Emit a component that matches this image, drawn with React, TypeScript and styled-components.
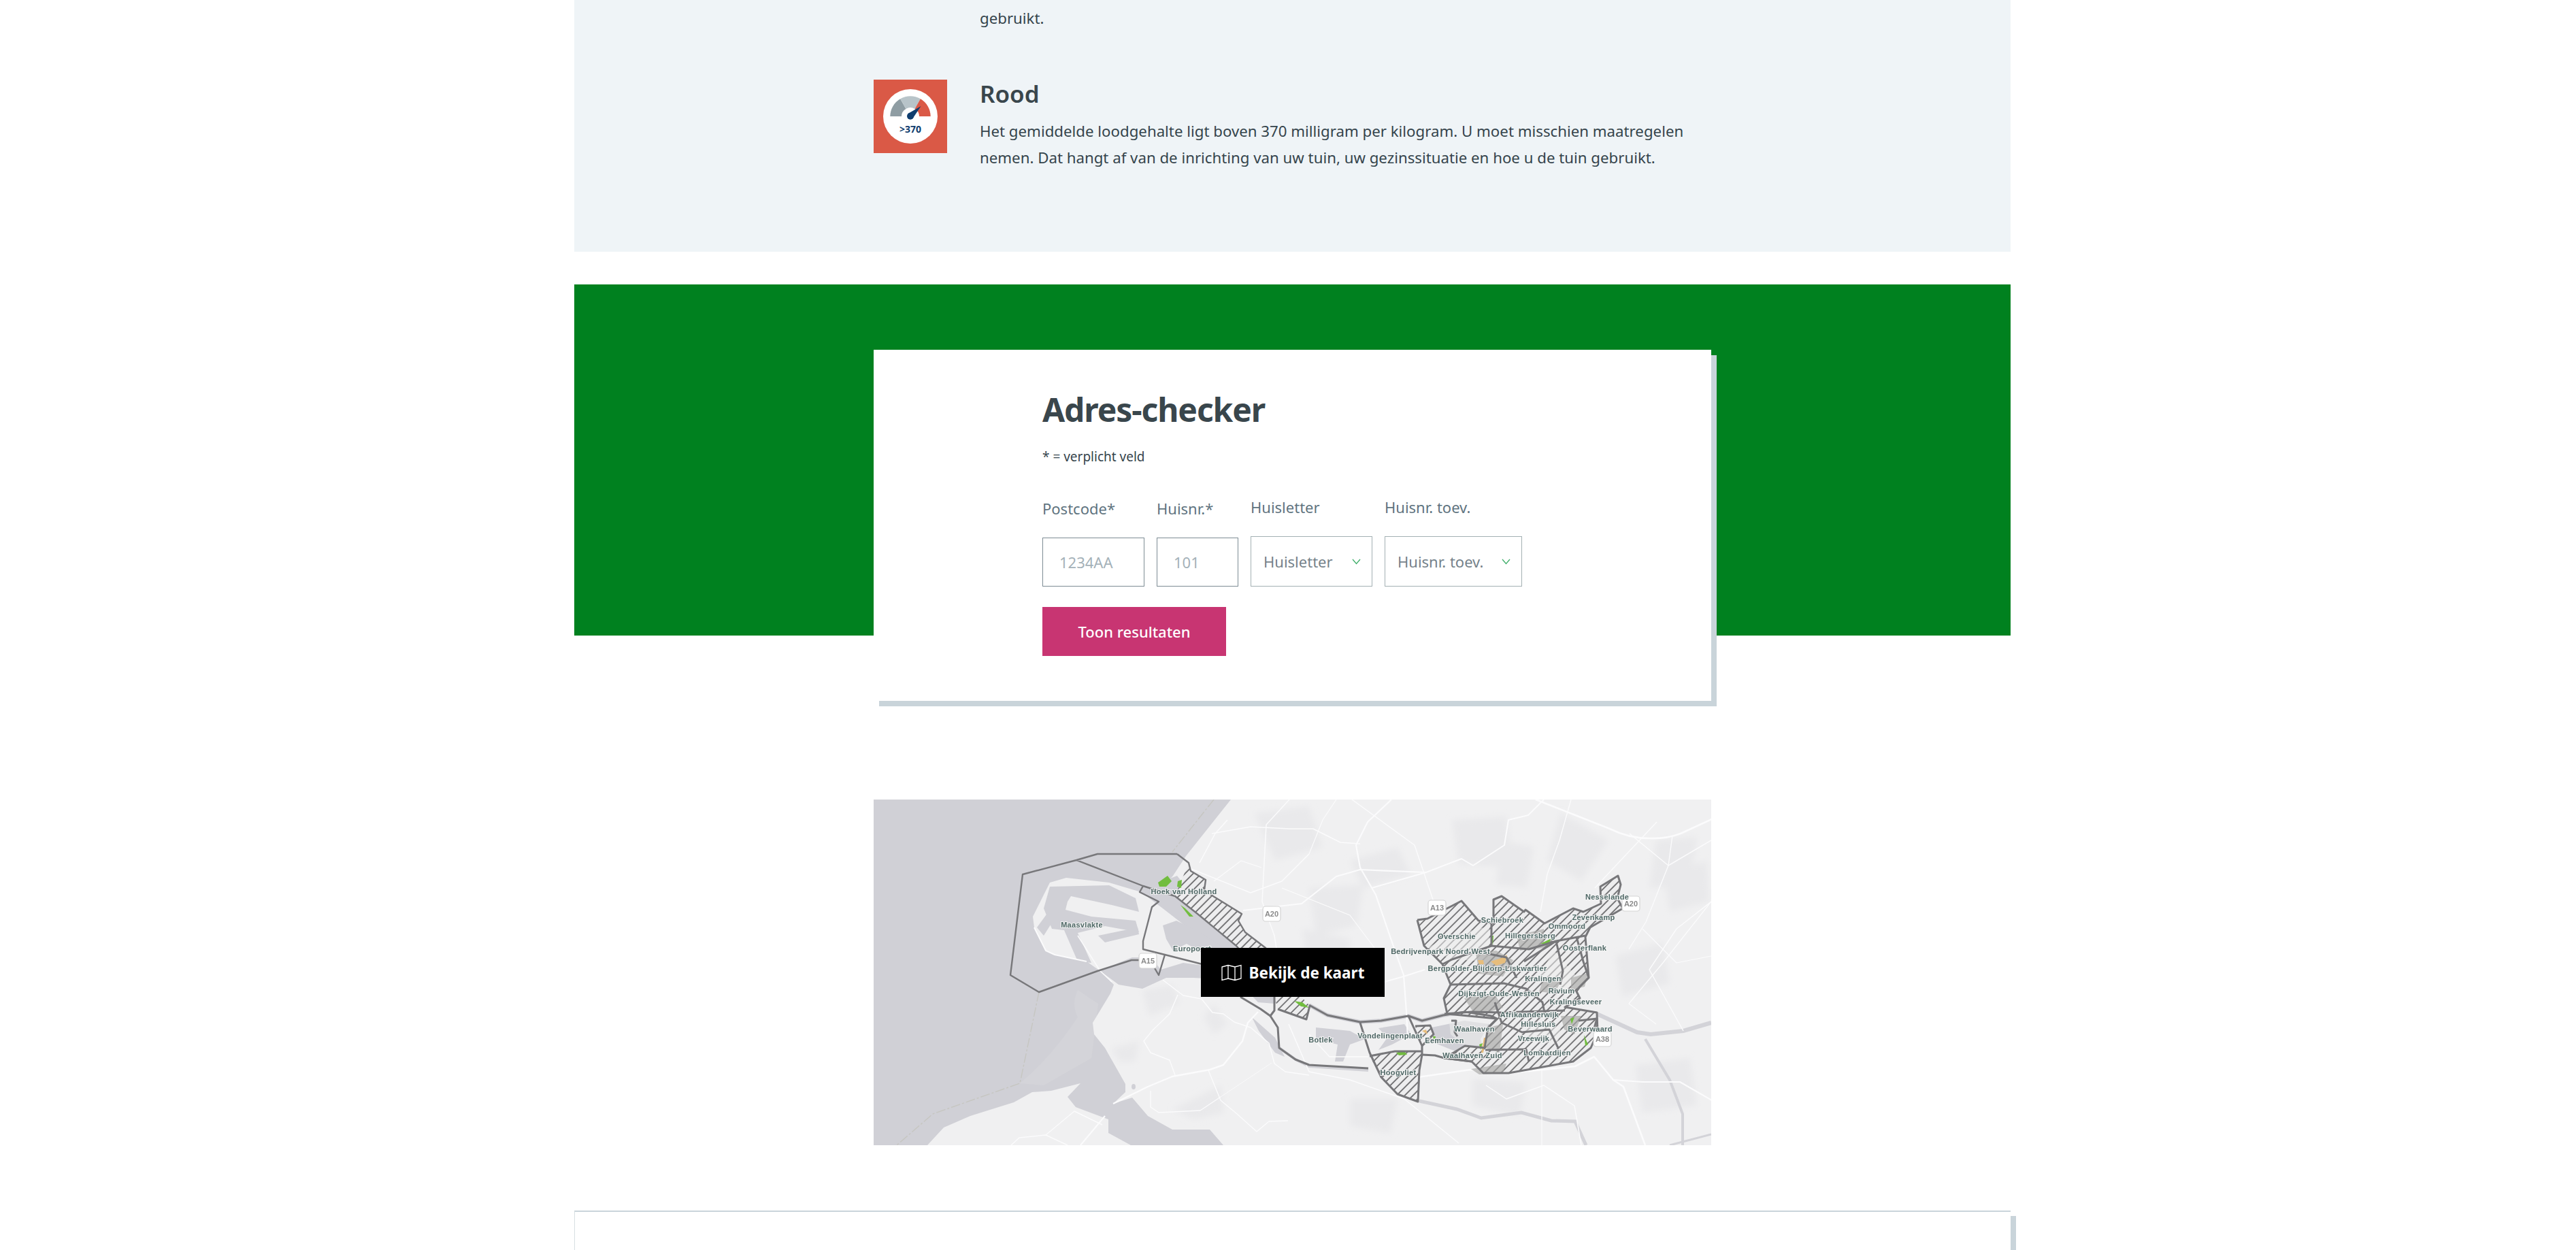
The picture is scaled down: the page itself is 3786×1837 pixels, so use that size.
import styled, { createGlobalStyle } from 'styled-components'

const GlobalStyle = createGlobalStyle`
  html, body {
    margin: 0;
    height: 100%;
    overflow: hidden;
    background: #fff;
  }
`

const SEA = '#d0d0d6'
const LAND = '#f0f0f1'
const PATCH = '#e9e9eb'
const OUTLINE = '#77777a'

const landAreas = [
  '525,0 1231,0 1231,508 514,508 494,485 467,485 439,485 403,465 380,438 352,447 370,430 370,418 340,365 324,345 322,328 348,285 353,272 333,252 313,238 266,228 253,222 236,188 234,172 259,122 283,115 346,122 393,136 425,128 440,112 459,83',
  '79,508 103,482 142,465 206,445 233,430 261,428 304,417 285,437 297,452 345,470 345,490 378,508',
]

const waterAreas = [
  '393,136 420,122 446,112 476,150 540,215 600,285 590,300 565,298 520,250 470,195 425,160',
  '333,252 360,240 380,232 408,232 422,250 455,240 500,246 530,265 470,262 430,262 395,278 360,272',
  '259,128 346,126 385,145 390,165 350,155 290,142 285,150 282,162 320,172 385,178 390,195 340,186 300,196 320,240 300,238 280,192 262,190 250,160',
  '240,188 262,158 272,165 250,200',
  '330,200 388,188 390,198 340,210',
  '425,185 445,178 480,195 540,235 500,235 460,212 440,222 430,205',
  '556,320 590,350 604,378 590,372 566,340',
  '650,335 700,340 722,352 700,360 690,385 678,385 682,360 650,352',
  '742,336 780,330 790,345 762,360 742,368 755,350',
  '820,335 868,325 905,330 892,352 900,382 850,368 825,358',
]

const patches = [
  '560,20 640,10 660,70 590,90',
  '700,90 770,70 790,110 720,130',
  '850,30 930,25 940,100 860,95',
  '1010,20 1080,60 1040,120 990,90',
  '1150,60 1210,55 1200,125 1140,130',
  '640,130 720,125 710,185 650,200',
  '920,60 970,70 960,130 915,125',
  '395,280 440,272 450,300 405,318',
  '350,365 390,355 385,385 360,385',
  '440,455 510,420 515,460 470,470',
  '500,300 520,330 500,345 485,320',
  '1090,230 1160,210 1170,270 1100,290',
  '1120,390 1200,380 1210,450 1130,460',
  '700,440 770,440 760,490 700,480',
  '880,410 960,415 950,465 880,450',
  '1160,110 1225,90 1228,150 1170,165',
  '630,190 700,205 700,285 640,260',
]

const waterLines = [
  { width: 6, d: 'M640 302 L667 317 L715 327 L746 325 L786 318 L806 325 L837 317 L869 312 L908 318 L1016 310 L1063 315 L1122 342 L1142 345 L1190 340 L1231 328' },
  { width: 5, d: 'M802 443 L857 455 L893 468 L952 460 L996 472 L1031 473 L1047 508' },
  { width: 4, d: 'M1134 352 L1170 412 L1189 462 L1189 508' },
  { width: 3, d: 'M1231 492 L1170 508' },
  { width: 4, d: 'M596 365 L620 382 L640 392 L727 398' },
]

const roads = [
  { width: 2.6, d: 'M973 0 L1082 43 Q1110 57 1140 57 Q1165 58 1186 50 L1236 27' },
  { width: 2.2, d: 'M761 0 L726 33 L709 67 L715 100 L738 140 L761 207 L779 258 L783 312 L785 350' },
  { width: 1.4, d: 'M703 0 L795 67 L824 153' },
  { width: 2, d: 'M732 130 L812 107 L864 87 L881 97 L927 67 L933 30 L962 23 L985 0' },
  { width: 2.2, d: 'M543 163 L629 153 L680 113 L715 103 L812 107' },
  { width: 1.5, d: 'M497 50 L554 40 L611 43 L646 43 L686 63 L715 65' },
  { width: 1.5, d: 'M611 0 L577 37 L571 150 L589 200 L600 270' },
  { width: 1.5, d: 'M479 93 L502 50 L520 30' },
  { width: 1.5, d: 'M462 100 L554 137 L600 120 L640 80' },
  { width: 1.5, d: 'M1111 50 L1168 97 L1231 60' },
  { width: 1.5, d: 'M1151 33 L1088 100 L1060 130' },
  { width: 1.4, d: 'M1025 0 L1008 60 L990 110 L980 165' },
  { width: 1.4, d: 'M1174 53 L1168 97 L1135 180 L1110 220' },
  { width: 1.3, d: 'M1231 150 L1160 240 L1110 300' },
  { width: 2.6, d: 'M800 408 L877 397 L932 402 L984 397 L1031 392 L1059 378 L1087 412 L1102 422 L1134 508' },
  { width: 2.2, d: 'M1087 412 L1130 415 L1185 415 L1232 442' },
  { width: 1.2, d: 'M982 398 L982 508' },
  { width: 2.4, d: 'M352 447 L403 422 L439 407 L494 397 L514 390 L542 355 L550 328 L565 312' },
  { width: 1.5, d: 'M447 287 L435 315 L411 338 L397 355 L407 372 L435 383 L443 405' },
  { width: 1.5, d: 'M425 265 L455 288 L482 293 L498 313 L514 315 L530 327 L554 335 L581 358 L589 388 L605 400 L640 405' },
  { width: 1.4, d: 'M492 398 L510 442 L534 462 L563 488 L581 473 L609 472' },
  { width: 1.4, d: 'M407 428 L407 452 L419 460 L480 457 L510 437' },
  { width: 0.8, d: 'M510 437 L585 387' },
  { width: 2.2, d: 'M340 465 L304 508' },
  { width: 1.5, d: 'M202 508 L214 497 L253 493 L285 508' },
  { width: 1.5, d: 'M253 493 L295 458 L336 478' },
  { width: 2, d: 'M236 188 L253 222 L266 228 L313 238' },
  { width: 1.5, d: 'M300 200 L333 252 L350 268' },
  { width: 1.5, d: 'M610 330 L640 400 L700 412 L780 440 L860 505' },
  { width: 1.5, d: 'M900 420 L930 440 L985 420 L1030 450 L1040 508' },
  { width: 1.5, d: 'M640 345 L670 378 L727 378' },
  { width: 1.4, d: 'M1190 340 L1140 250 L1180 190 L1231 150' },
  { width: 1.2, d: 'M640 80 L660 30 L680 0' },
  { width: 1.2, d: 'M500 120 L540 90 L570 100' },
  { width: 1.2, d: 'M600 130 L650 150 L700 170 L745 230' },
  { width: 2, d: 'M700 282 L779 260 L810 250' },
  { width: 1.2, d: 'M1130 190 L1180 240 L1231 230' },
  { width: 1.2, d: 'M1110 300 L1150 330' },
]

const hatched = [
  '463,93 466,105 488,118 486,133 499,142 541,168 536,178 546,195 576,218 600,240 570,240 533,215 476,168 443,142',
  '589,290 594,308 636,323 641,303 610,270',
  '729,377 766,370 806,370 802,398 800,444 770,433 746,408',
  '796,333 818,332 823,345 806,362',
  '799,177 814,175 864,149 889,178 911,182 911,147 923,142 956,165 958,162 986,182 1028,160 1043,165 1069,153 1068,128 1094,112 1098,125 1093,145 1101,160 1053,188 1046,202 1051,262 1038,275 1033,282 1038,292 1016,305 1063,313 1064,342 1054,365 1028,385 933,402 896,402 879,385 839,380 869,362 898,365 903,335 916,322 843,315 838,292 848,272 836,242 809,215',
]

const clearings = [
  '840,202 905,186 904,238 850,235 815,218',
  '1000,222 1035,262 1012,285 975,262',
  '845,318 905,322 895,362 865,360 848,345',
  '958,330 1010,335 1005,360 960,355',
]

const coastOutlines = [
  '446,80 329,80 298,89 219,110 201,258 243,283 329,252 379,236 406,236 419,258 428,228 396,220 396,208 409,158 419,150 391,136 396,127 298,89',
  '446,80 463,93 466,105 488,118 486,133 499,142 541,168 536,178 546,195 576,218 600,245',
  '396,127 443,142 476,168 533,215 569,255',
  '428,228 483,242 510,250',
]

const cityOutlines = [
  '539,290 569,308 583,318 589,310 589,290',
  '583,318 594,335 596,365 620,382 640,390 727,395',
  '594,308 636,323 641,303',
  '640,302 667,317 715,327 746,325 786,318 806,325 837,317 869,312 908,318 916,322',
  '715,328 729,372 746,408 770,433 800,444 802,398 806,375 806,362 786,318',
  '729,377 766,370 806,370',
  '796,333 818,332 823,345 806,362',
  '806,375 825,376 839,380 879,385',
  '799,177 814,175 864,149 889,178 911,182 911,147 923,142 956,165 958,162 986,182 1028,160 1043,165 1069,153 1068,128 1094,112 1098,125 1093,145 1101,160 1053,188 1046,202 1051,262 1038,275 1033,282 1038,292 1016,305 1063,313 1064,342 1054,365 1028,385 933,402 896,402 879,385 839,380 869,362 898,365 903,335 916,322 843,315 838,292 848,272 836,242 809,215 799,177',
  '908,182 908,215 963,220 1003,208 1046,200',
  '1003,208 1013,252 1009,272',
  '848,272 926,270 959,278 983,298 986,313',
  '839,315 879,312 923,313 1016,310',
  '913,298 923,328 953,342 993,338 1006,365',
  '899,368 959,367 963,385',
  '849,325 856,325 854,342 858,348',
  '1036,325 1063,322 1058,340',
  '1033,202 1043,238 1051,262',
  '956,238 1003,208',
  '908,215 850,235 836,242',
  '895,225 930,232 945,262',
]

const urban = [
  '885,225 915,222 940,236 925,260 890,256',
  '945,200 985,190 985,215 950,222',
  '868,292 912,285 925,306 885,318',
  '985,262 1010,268 1000,285 978,282',
  '1025,262 1050,255 1045,275 1025,280',
  '1010,318 1040,318 1030,345 1015,338',
  '903,335 925,330 920,372 900,365',
  '878,396 930,388 925,402 890,404',
  '962,220 1000,205 990,218',
]

const greens = [
  '418,122 432,112 438,120 430,128 420,128',
  '447,120 453,118 452,130 446,128',
  '451,155 458,160 470,172 464,172',
  '768,372 780,370 784,375 772,376',
  '618,296 630,298 640,306 628,304',
  '1024,322 1030,320 1026,330',
  '822,348 826,348 824,358',
  '1044,346 1050,360 1046,362',
  '908,200 911,200 910,215',
  '980,212 996,204 992,212',
  '890,360 895,358 892,368',
]

const oranges = [
  '907,238 925,232 931,228 928,240 915,244',
  '888,236 896,236 897,242 890,242',
  '897,350 900,350 896,372 893,372',
  '806,340 812,338 814,345',
]

const labels = [
  { text: 'Nesselande', x: 1078, y: 143 },
  { text: 'Zevenkamp', x: 1058, y: 173 },
  { text: 'Ommoord', x: 1019, y: 186 },
  { text: 'Schiebroek', x: 924, y: 177 },
  { text: 'Overschie', x: 857, y: 201 },
  { text: 'Hillegersberg', x: 965, y: 200 },
  { text: 'Oosterflank', x: 1045, y: 218 },
  { text: 'Bedrijvenpark Noord-West', x: 833, y: 223 },
  { text: 'Bergpolder-Blijdorp-Liskwartier', x: 902, y: 248 },
  { text: 'Kralingen', x: 984, y: 263 },
  { text: 'Rivium', x: 1011, y: 281 },
  { text: 'Dijkzigt-Oude-Westen', x: 919, y: 285 },
  { text: 'Kralingseveer', x: 1032, y: 297 },
  { text: 'Afrikaanderwijk', x: 964, y: 316 },
  { text: 'Hillesluis', x: 977, y: 330 },
  { text: 'Beverwaard', x: 1053, y: 337 },
  { text: 'Waalhaven', x: 883, y: 337 },
  { text: 'Vondelingenplaat', x: 759, y: 347 },
  { text: 'Vreewijk', x: 970, y: 351 },
  { text: 'Eemhaven', x: 839, y: 354 },
  { text: 'Lombardijen', x: 990, y: 372 },
  { text: 'Waalhaven Zuid', x: 880, y: 376 },
  { text: 'Hoogvliet', x: 771, y: 401 },
  { text: 'Botlek', x: 657, y: 353 },
  { text: 'Maasvlakte', x: 306, y: 184 },
  { text: 'Hoek van Holland', x: 456, y: 135 },
  { text: 'Europoort', x: 468, y: 219 },
]

const shields = [
  { text: 'A13', x: 828, y: 159 },
  { text: 'A20', x: 1113, y: 153 },
  { text: 'A38', x: 1071, y: 352 },
  { text: 'A20', x: 585, y: 168 },
  { text: 'A15', x: 403, y: 237 },
]

const GaugeIcon = () => (
  <svg width="108" height="108" viewBox="0 0 108 108" style={{ display: 'block' }}>
    <rect width="108" height="108" fill="#da5946" />
    <circle cx="54" cy="54" r="40" fill="#fff" />
    <path d="M24.3 54 A29.7 29.7 0 0 1 39.2 28.3 L47.5 43 A13 13 0 0 0 41 54 Z" fill="#8f9da3" />
    <path d="M39.2 28.3 A29.7 29.7 0 0 1 68.8 28.3 L60.5 43 A13 13 0 0 0 47.5 43 Z" fill="#b8c4c9" />
    <path d="M68.8 28.3 A29.7 29.7 0 0 1 83.7 54 L67 54 A13 13 0 0 0 60.5 43 Z" fill="#da5946" />
    <circle cx="54" cy="53.7" r="5" fill="#0f3d6e" />
    <path d="M50.5 50 L69.5 39 L57.5 57 Z" fill="#0f3d6e" />
    <text x="54" y="78" textAnchor="middle" fontFamily="'Noto Sans', sans-serif" fontWeight="700" fontSize="14" fill="#0f3d6e">
      &gt;370
    </text>
  </svg>
)

const MapDrawing = () => (
  <MapSvg viewBox="0 0 1231 508" width="1231" height="508">
    <defs>
      <pattern id="hatch" width="8.5" height="8.5" patternUnits="userSpaceOnUse" patternTransform="rotate(45)">
        <rect width="8.5" height="8.5" fill="#ededee" />
        <line x1="1" y1="0" x2="1" y2="8.5" stroke="#3f3f41" strokeWidth="1.3" />
      </pattern>
      <filter id="soft" x="-20%" y="-20%" width="140%" height="140%">
        <feGaussianBlur stdDeviation="5" />
      </filter>
    </defs>
    <rect width="1231" height="508" fill={SEA} />
    <path d="M215 417 Q260 380 300 320 Q290 300 300 280 L330 300 L320 380 L250 420 Z" fill="#d4d4d9" />
    {landAreas.map((points) => <polygon key={points} points={points} fill={LAND} />)}
    <g filter="url(#soft)">
      {patches.map((points) => <polygon key={points} points={points} fill={PATCH} />)}
    </g>
    {waterAreas.map((points) => <polygon key={points} points={points} fill={SEA} />)}
    {waterLines.map(({ d, width }) => <path key={d} d={d} fill="none" stroke="#d3d3d8" strokeWidth={width} />)}
    <path d="M500 0 L439 77 M243 283 L215 417 L87 462 L34 508" fill="none" stroke="#c6c6c1" strokeWidth="1.4" strokeDasharray="14 3 3 3" />
    <ellipse cx="382" cy="422" rx="3" ry="4" fill={SEA} />
    {roads.map(({ d, width }) => <path key={d} d={d} fill="none" stroke="#fbfbfc" strokeWidth={width} strokeLinejoin="round" />)}
    {hatched.map((points) => <polygon key={points} points={points} fill="url(#hatch)" />)}
    {clearings.map((points) => <polygon key={points} points={points} fill="#eeeeef" opacity="0.55" />)}
    {urban.map((points) => <polygon key={points} points={points} fill="#a8a8a6" opacity="0.65" />)}
    {oranges.map((points) => <polygon key={points} points={points} fill="#e7bd7c" />)}
    {greens.map((points) => <polygon key={points} points={points} fill="#72bd3f" />)}
    {coastOutlines.map((points) => (
      <polyline key={points} points={points} fill="none" stroke={OUTLINE} strokeWidth="2.4" strokeLinejoin="round" />
    ))}
    {cityOutlines.map((points) => (
      <polyline key={points} points={points} fill="none" stroke={OUTLINE} strokeWidth="3" strokeLinejoin="round" />
    ))}
    {shields.map(({ text, x, y }) => (
      <g key={text + x}>
        <rect x={x - 13} y={y - 11} width="26" height="22" rx="4" fill="#fff" stroke="#d4d4d4" strokeWidth="1.2" />
        <ShieldText x={x} y={y + 4}>{text}</ShieldText>
      </g>
    ))}
    {labels.map(({ text, x, y }) => <MapLabel key={text} x={x} y={y + 4}>{text}</MapLabel>)}
  </MapSvg>
)

const Chevron = () => (
  <ChevronSvg width="13" height="9" viewBox="0 0 13 9">
    <polyline points="1,1 6.5,7.5 12,1" fill="none" stroke="#3fae6a" strokeWidth="1.3" />
  </ChevronSvg>
)

const FoldedMapIcon = () => (
  <svg width="30" height="25" viewBox="0 0 30 25" style={{ display: 'block' }}>
    <path d="M1 4 L10 1.5 L20 4 L29 1.5 L29 21 L20 23.5 L10 21 L1 23.5 Z M10 1.5 V21 M20 4 V23.5" fill="none" stroke="#fff" strokeWidth="1.3" />
  </svg>
)

const App = () => {
  return (
    <Page>
      <GlobalStyle />
      <InfoPanel>
        <Paragraph $indent>gebruikt.</Paragraph>
        <InfoRow>
          <GaugeIcon />
          <div>
            <InfoTitle>Rood</InfoTitle>
            <Paragraph>
              Het gemiddelde loodgehalte ligt boven 370 milligram per kilogram. U moet misschien maatregelen
              <br />
              nemen. Dat hangt af van de inrichting van uw tuin, uw gezinssituatie en hoe u de tuin gebruikt.
            </Paragraph>
          </div>
        </InfoRow>
      </InfoPanel>

      <GreenBand>
        <FormCard>
          <FormTitle>Adres-checker</FormTitle>
          <FormNote>* = verplicht veld</FormNote>
          <FieldRow>
            <Field>
              <FieldLabel>Postcode*</FieldLabel>
              <TextInput $width={150} placeholder="1234AA" />
            </Field>
            <Field>
              <FieldLabel>Huisnr.*</FieldLabel>
              <TextInput $width={120} placeholder="101" />
            </Field>
            <Field>
              <FieldLabel>Huisletter</FieldLabel>
              <SelectBox $width={179}>
                <span>Huisletter</span>
                <Chevron />
              </SelectBox>
            </Field>
            <Field>
              <FieldLabel>Huisnr. toev.</FieldLabel>
              <SelectBox $width={202}>
                <span>Huisnr. toev.</span>
                <Chevron />
              </SelectBox>
            </Field>
          </FieldRow>
          <SubmitButton>Toon resultaten</SubmitButton>
        </FormCard>
      </GreenBand>

      <MapFrame>
        <MapDrawing />
        <MapButton>
          <FoldedMapIcon />
          Bekijk de kaart
        </MapButton>
      </MapFrame>

      <BottomCard />
    </Page>
  )
}

const Page = styled.div`
  width: 2111px;
  margin-left: 844px;
  font-family: 'Noto Sans', 'Open Sans', sans-serif;
  color: #35444c;
`

const InfoPanel = styled.section`
  height: 370px;
  box-sizing: border-box;
  padding: 7px 0 0 440px;
  background: #eff4f7;
`

const InfoRow = styled.div`
  display: flex;
  gap: 48px;
  margin-top: 71px;
`

const InfoTitle = styled.h3`
  margin: 0 0 14px;
  font-size: 35px;
  line-height: 42px;
  font-weight: 600;
  color: #39464c;
`

const Paragraph = styled.p<{ $indent?: boolean }>`
  margin: 0 0 0 ${({ $indent }) => ($indent ? '156px' : '0')};
  font-size: 22.25px;
  line-height: 39px;
  white-space: nowrap;
`

const GreenBand = styled.section`
  height: 516px;
  box-sizing: border-box;
  margin-top: 48px;
  padding: 96px 0 0 440px;
  background: #00811f;
`

const FormCard = styled.div`
  width: 1231px;
  height: 516px;
  box-sizing: border-box;
  padding: 58px 0 0 248px;
  background: #fff;
  box-shadow: 8px 8px 0 #c9d4da;
`

const FormTitle = styled.h2`
  margin: 0;
  font-size: 48px;
  line-height: 60px;
  font-weight: 700;
  letter-spacing: -1.1px;
  color: #39464c;
`

const FormNote = styled.p`
  margin: 24px 0 44px;
  font-size: 19px;
  line-height: 30px;
`

const FieldRow = styled.div`
  display: flex;
  align-items: flex-end;
  gap: 18px;
`

const Field = styled.label`
  display: flex;
  flex-direction: column;
`

const FieldLabel = styled.span`
  margin-bottom: 28px;
  font-size: 22px;
  line-height: 30px;
  color: #5f7480;
`

const TextInput = styled.input<{ $width: number }>`
  width: ${({ $width }) => $width}px;
  height: 72px;
  box-sizing: border-box;
  padding: 0 0 0 24px;
  border: 1.5px solid #7d8c94;
  border-radius: 0;
  outline: none;
  background: #fff;
  font: 22px 'Noto Sans', sans-serif;

  &::placeholder {
    color: #a4b1b8;
    opacity: 1;
  }
`

const SelectBox = styled.div<{ $width: number }>`
  display: flex;
  align-items: center;
  justify-content: space-between;
  width: ${({ $width }) => $width}px;
  height: 74px;
  box-sizing: border-box;
  padding: 0 16px 0 18px;
  border: 1.5px solid #a3b0b3;
  font-size: 22px;
  color: #75828a;
  white-space: nowrap;
`

const ChevronSvg = styled.svg`
  flex: none;
  display: block;
`

const SubmitButton = styled.button`
  display: block;
  width: 270px;
  height: 72px;
  margin-top: 30px;
  padding: 0;
  border: 0;
  background: #c83572;
  color: #fff;
  font: 500 22px 'Noto Sans', sans-serif;
`

const MapFrame = styled.div`
  position: relative;
  width: 1231px;
  height: 508px;
  margin: 241px 0 0 440px;
  overflow: hidden;
`

const MapSvg = styled.svg`
  display: block;
  filter: blur(0.4px);
`

const MapLabel = styled.text`
  font-family: 'Liberation Sans', Arial, sans-serif;
  font-size: 11px;
  font-weight: 700;
  letter-spacing: 0.3px;
  text-anchor: middle;
  fill: #4f6866;
  stroke: #f4f4f4;
  stroke-width: 2px;
  paint-order: stroke;
`

const ShieldText = styled.text`
  font-family: 'Liberation Sans', Arial, sans-serif;
  font-size: 11px;
  font-weight: 700;
  text-anchor: middle;
  fill: #8b8b8b;
`

const MapButton = styled.button`
  position: absolute;
  left: 481px;
  top: 218px;
  display: flex;
  align-items: center;
  justify-content: center;
  gap: 11px;
  width: 270px;
  height: 72px;
  padding: 0;
  border: 0;
  background: #000;
  color: #fff;
  font: 700 22.5px 'Noto Sans', sans-serif;
`

const BottomCard = styled.div`
  height: 58px;
  margin-top: 96px;
  box-sizing: border-box;
  border-top: 2px solid #c9d4da;
  border-left: 1px solid #d7dfe3;
  background: #fff;
  box-shadow: 8px 8px 0 #c9d4da;
`

export default App
